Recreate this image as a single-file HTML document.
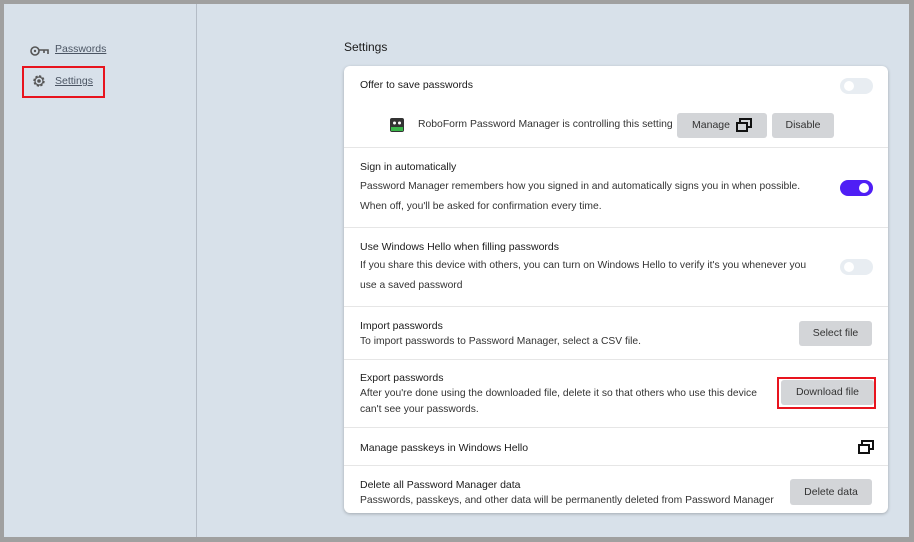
<!DOCTYPE html>
<html><head><style>
*{margin:0;padding:0;box-sizing:border-box}
body{width:914px;height:542px;background:#a0a0a0;font-family:"Liberation Sans",sans-serif;color:#1b1b1b;position:relative;overflow:hidden}
#app{position:absolute;left:4px;top:4px;width:905px;height:533px;background:#d8e1ea}
.side{position:absolute;left:192px;top:0;width:1px;height:533px;background:#b4bcc6}
.a{position:absolute;font-size:10.5px;color:#4b5563;text-decoration:underline}
.t{position:absolute;font-size:10.5px}
.s{position:absolute;font-size:10.3px;color:#333}
#card{position:absolute;left:340px;top:62px;width:544px;height:447px;background:#fff;border-radius:6px;box-shadow:0 1px 3px rgba(0,0,0,.25)}
.hr{position:absolute;left:0;width:544px;height:1px;background:#e6e6e6}
.btn{position:absolute;background:#d3d5d8;border-radius:3px;font-size:10.5px;color:#333;text-align:center}
.tg{position:absolute;width:33px;height:16px;border-radius:8px;background:#e8edf2}
.tg i{position:absolute;top:3px;left:4px;width:10px;height:10px;border-radius:50%;background:#fff}
.red{position:absolute;border:2px solid #e8141e}
</style></head><body>
<div id="app">
<div class="side"></div>
<svg style="position:absolute;left:26px;top:41px" width="20" height="12" viewBox="0 0 20 12"><circle cx="5" cy="6" r="4" fill="none" stroke="#555" stroke-width="1.6"/><circle cx="5" cy="6" r="1.2" fill="#555"/><path d="M9 5h9v4M14 5v3" fill="none" stroke="#555" stroke-width="1.6"/></svg>
<div class="a" style="left:51px;top:39px">Passwords</div>
<svg style="position:absolute;left:27px;top:69px" width="16" height="16" viewBox="0 0 16 16"><circle cx="8" cy="8" r="5" fill="none" stroke="#555" stroke-width="1.4" stroke-dasharray="2.4 1.5"/><circle cx="8" cy="8" r="4" fill="none" stroke="#555" stroke-width="1.2"/><circle cx="8" cy="8" r="1.8" fill="#555"/></svg>
<div class="a" style="left:51px;top:71px">Settings</div>
<div class="red" style="left:18px;top:62px;width:83px;height:32px"></div>
<div class="t" style="left:340px;top:36px;font-size:12px">Settings</div>
<div id="card">
<div class="t" style="left:16px;top:13px">Offer to save passwords</div>
<div class="tg" style="left:496px;top:12px"><i></i></div>
<svg style="position:absolute;left:45px;top:51px" width="16" height="16" viewBox="0 0 16 16"><rect x="1" y="1" width="14" height="14" rx="2" fill="#333"/><rect x="2" y="10" width="12" height="4" fill="#3bb54a"/><circle cx="5.5" cy="6" r="1.5" fill="#fff"/><circle cx="10.5" cy="6" r="1.5" fill="#fff"/></svg>
<div class="s" style="left:74px;top:53px;font-size:10.4px">RoboForm Password Manager is controlling this setting</div>
<div class="btn" style="left:333px;top:47px;width:90px;height:25px;line-height:25px;padding-right:22px">Manage</div>
<svg style="position:absolute;left:392px;top:52px" width="16" height="14" viewBox="0 0 16 14"><rect x="4" y="1" width="11" height="8" fill="none" stroke="#111" stroke-width="2"/><rect x="1" y="5" width="10" height="8" fill="#d3d5d8" stroke="#111" stroke-width="2"/></svg>
<div class="btn" style="left:428px;top:47px;width:62px;height:25px;line-height:25px">Disable</div>
<div class="hr" style="top:81px"></div>
<div class="t" style="left:16px;top:95px">Sign in automatically</div>
<div class="s" style="left:16px;top:115px">Password Manager remembers how you signed in and automatically signs you in when possible.</div>
<div class="s" style="left:16px;top:135px">When off, you'll be asked for confirmation every time.</div>
<div class="tg" style="left:496px;top:114px;background:#4f1ef5"><i style="left:19px"></i></div>
<div class="hr" style="top:161px"></div>
<div class="t" style="left:16px;top:175px">Use Windows Hello when filling passwords</div>
<div class="s" style="left:16px;top:194px">If you share this device with others, you can turn on Windows Hello to verify it's you whenever you</div>
<div class="s" style="left:16px;top:214px">use a saved password</div>
<div class="tg" style="left:496px;top:193px"><i></i></div>
<div class="hr" style="top:240px"></div>
<div class="t" style="left:16px;top:254px">Import passwords</div>
<div class="s" style="left:16px;top:270px">To import passwords to Password Manager, select a CSV file.</div>
<div class="btn" style="left:455px;top:255px;width:73px;height:25px;line-height:25px">Select file</div>
<div class="hr" style="top:293px"></div>
<div class="t" style="left:16px;top:306px">Export passwords</div>
<div class="s" style="left:16px;top:322px">After you're done using the downloaded file, delete it so that others who use this device</div>
<div class="s" style="left:16px;top:338px">can't see your passwords.</div>
<div class="btn" style="left:437px;top:314px;width:93px;height:25px;line-height:25px">Download file</div>
<div class="red" style="left:433px;top:311px;width:99px;height:32px"></div>
<div class="hr" style="top:361px"></div>
<div class="t" style="left:16px;top:376px">Manage passkeys in Windows Hello</div>
<svg style="position:absolute;left:514px;top:374px" width="16" height="14" viewBox="0 0 16 14"><rect x="4" y="1" width="11" height="8" fill="none" stroke="#111" stroke-width="2"/><rect x="1" y="5" width="10" height="8" fill="#fff" stroke="#111" stroke-width="2"/></svg>
<div class="hr" style="top:399px"></div>
<div class="t" style="left:16px;top:413px">Delete all Password Manager data</div>
<div class="s" style="left:16px;top:429px">Passwords, passkeys, and other data will be permanently deleted from Password Manager</div>
<div class="btn" style="left:446px;top:413px;width:82px;height:26px;line-height:26px">Delete data</div>
</div>
</div>
</body></html>
